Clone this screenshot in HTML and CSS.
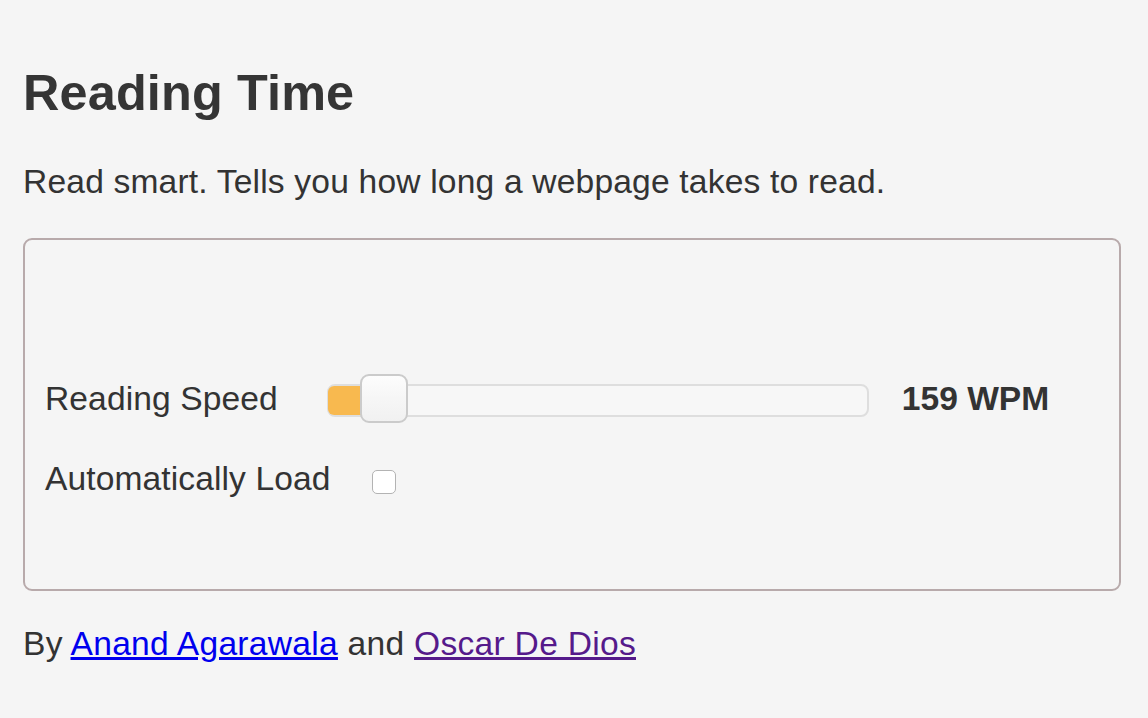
FILE: index.html
```
<!DOCTYPE html>
<html lang="en">
<head>
<meta charset="utf-8">
<title>Reading Time</title>
<link rel="stylesheet" href="styles.css">
</head>
<body>
<h1 class="title">Reading Time</h1>
<p class="tagline">Read smart. Tells you how long a webpage takes to read.</p>
<div class="box">
  <div class="row">
    <span class="label">Reading Speed</span>
    <div class="slider">
      <div class="fill"></div>
      <div class="thumb"></div>
    </div>
    <span class="value">159 WPM</span>
  </div>
  <div class="row row-second">
    <span class="label">Automatically Load</span>
    <input class="check" type="checkbox">
  </div>
</div>
<p class="credits">By <a class="link" href="#a">Anand Agarawala</a> and <a class="link visited" href="#b">Oscar De Dios</a></p>
</body>
</html>
```
FILE: styles.css
```
html, body {
  margin: 0;
  padding: 0;
}
body {
  background: #f5f5f5;
  color: #333;
  font-family: "Liberation Sans", Arial, sans-serif;
  padding: 0 27px 0 23px;
}
.title {
  margin: 64px 0 0;
  font-size: 50.4px;
  line-height: 58px;
  font-weight: bold;
  color: #353535;
  letter-spacing: 0.15px;
}
.tagline {
  margin: 40px 0 0;
  font-size: 33.6px;
  line-height: 40px;
  letter-spacing: 0.18px;
}
.box {
  margin-top: 36px;
  border: 2px solid #b8aaab;
  border-radius: 9px;
  padding: 132px 20px 87px;
}
.row {
  display: flex;
  align-items: center;
  height: 50px;
  font-size: 33.6px;
  line-height: 40px;
}
.row-second {
  margin-top: 30px;
}
.label {
  margin-top: 4px;
  letter-spacing: 0.1px;
}
.slider {
  position: relative;
  box-sizing: border-box;
  width: 542px;
  height: 33px;
  margin: 6px 0 0 49px;
  border: 2px solid #dedede;
  border-radius: 8px;
  background: #f7f7f7;
}
.fill {
  position: absolute;
  left: -1px;
  top: 0;
  width: 34px;
  height: 100%;
  background: #f8b94f;
  border-radius: 6px 0 0 6px;
}
.thumb {
  position: absolute;
  left: 31px;
  top: -12px;
  box-sizing: border-box;
  width: 48px;
  height: 49px;
  border: 2px solid #cbcbcb;
  border-radius: 9px;
  background: linear-gradient(#fdfdfd, #f6f6f6 50%, #f1f1f1);
}
.value {
  margin: 4px 0 0 33px;
  font-weight: bold;
}
.check {
  -webkit-appearance: none;
  appearance: none;
  box-sizing: border-box;
  width: 24px;
  height: 24px;
  margin: 9px 0 0 41px;
  border: 1.5px solid #b3b3b3;
  border-radius: 5px;
  background: #fff;
}
.credits {
  margin: 33px 0 0;
  font-size: 33.6px;
  line-height: 40px;
  letter-spacing: 0.28px;
}
.link {
  color: #0000ee;
  text-decoration: underline;
}
.link.visited {
  color: #551a8b;
}
```
